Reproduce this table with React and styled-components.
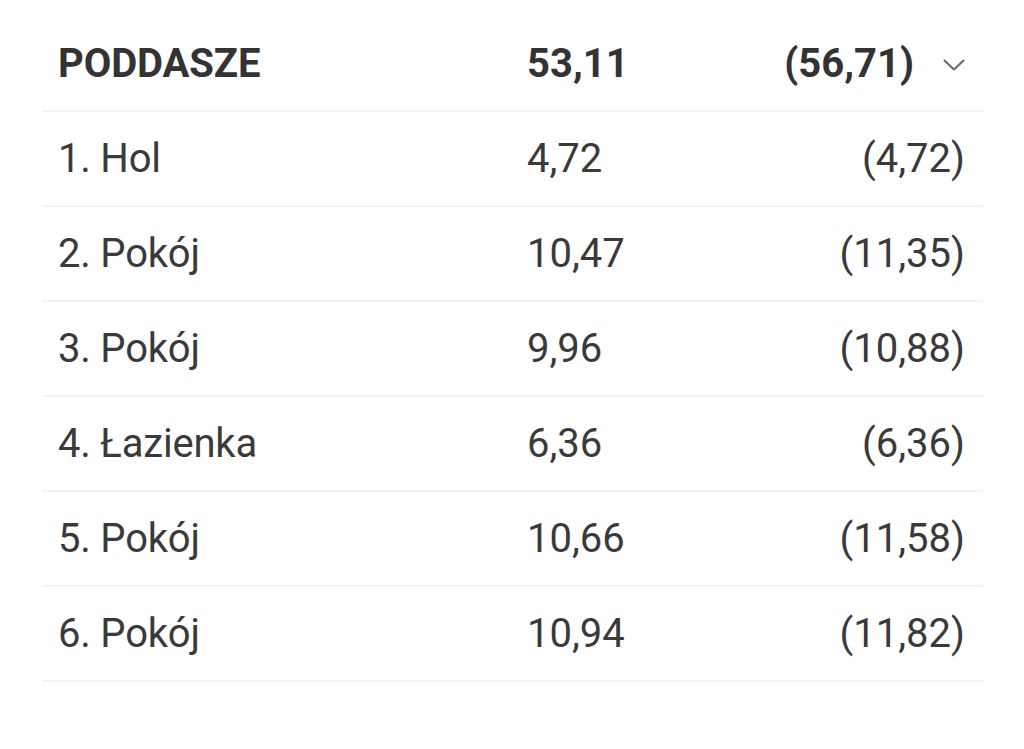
import React from 'react';
import styled, { createGlobalStyle } from 'styled-components';

const GlobalStyle = createGlobalStyle`
    body {
        margin: 0;
        background: #ffffff;
        font-family: Roboto, "Liberation Sans", sans-serif;
        color: #333333;
    }
`;

const Page = styled.div`
    width: 1024px;
    height: 749px;
    padding: 17px 41px 0 42px;
    box-sizing: border-box;
`;

const Row = styled.div`
    display: grid;
    grid-template-columns: 469px 1fr auto;
    align-items: center;
    height: 93px;
    padding: 0 18px 0 16px;
    border-bottom: 2px solid #f3f3f3;
    font-size: 40px;
    font-weight: ${props => (props.header ? 700 : 400)};
    color: ${props => (props.header ? '#333333' : '#3a3a3a')};
`;

const Name = styled.span`
    letter-spacing: ${props => (props.header ? '-0.1px' : '-0.2px')};
`;

const Area = styled.span``;

const Total = styled.span`
    display: flex;
    align-items: center;
    justify-content: flex-end;
    gap: 29px;
`;

const Chevron = styled.svg`
    width: 22px;
    height: 12px;
    margin-top: 3px;
`;

const rooms = [
    { name: '1. Hol', area: '4,72', total: '(4,72)' },
    { name: '2. Pokój', area: '10,47', total: '(11,35)' },
    { name: '3. Pokój', area: '9,96', total: '(10,88)' },
    { name: '4. Łazienka', area: '6,36', total: '(6,36)' },
    { name: '5. Pokój', area: '10,66', total: '(11,58)' },
    { name: '6. Pokój', area: '10,94', total: '(11,82)' }
];

export default function App() {
    return (
        <Page>
            <GlobalStyle />
            <Row header>
                <Name header>PODDASZE</Name>
                <Area>53,11</Area>
                <Total>
                    (56,71)
                    <Chevron viewBox='0 0 22 12' fill='none'>
                        <path d='M1.5 1.5 L11 10.5 L20.5 1.5' stroke='#666666' strokeWidth='2' strokeLinecap='round' strokeLinejoin='round' />
                    </Chevron>
                </Total>
            </Row>
            {rooms.map(room => (
                <Row key={room.name}>
                    <Name>{room.name}</Name>
                    <Area>{room.area}</Area>
                    <Total>{room.total}</Total>
                </Row>
            ))}
        </Page>
    );
}
